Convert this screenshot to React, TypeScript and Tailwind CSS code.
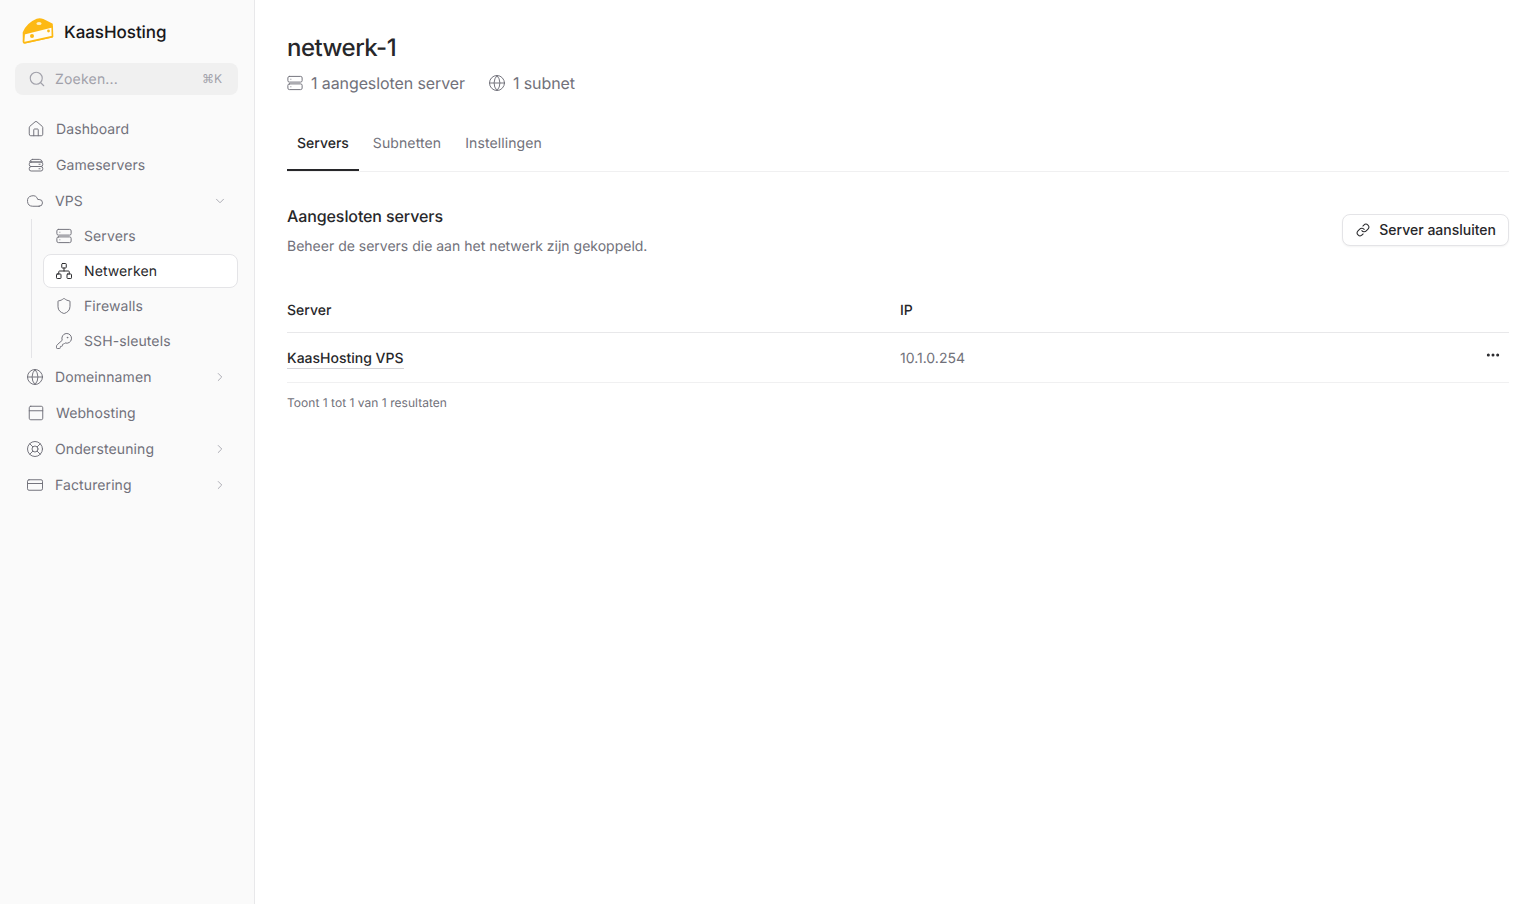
import React from 'react';
import {
  ChevronDown,
  ChevronRight,
  Cloud,
  CreditCard,
  Ellipsis,
  Globe,
  House,
  KeyRound,
  LifeBuoy,
  Link,
  Network,
  PanelTop,
  Search,
  Shield,
} from 'lucide-react';

type IconType = React.ComponentType<{ className?: string; strokeWidth?: number }>;

// Stacked drives icon for the game servers entry.
const GameServerIcon: IconType = ({ className, strokeWidth = 1.5 }) => (
  <svg viewBox="0 0 24 24" fill="none" stroke="currentColor" strokeWidth={strokeWidth} strokeLinecap="round" strokeLinejoin="round" className={className}>
    <path d="M7.5 4.5h9a4.5 4.5 0 0 1 4 3.5H3.5a4.5 4.5 0 0 1 4-3.5Z" />
    <rect x="3" y="8" width="18" height="6" rx="2.5" />
    <rect x="3" y="14" width="18" height="6" rx="2.5" />
    <path d="M16 11h1.5M16 17h1.5" />
  </svg>
);

// Two closely stacked server racks, dots on the left.
const ServerIcon: IconType = ({ className, strokeWidth = 1.5 }) => (
  <svg viewBox="0 0 24 24" fill="none" stroke="currentColor" strokeWidth={strokeWidth} strokeLinecap="round" strokeLinejoin="round" className={className}>
    <rect x="2.5" y="3.2" width="19" height="7.6" rx="2" />
    <rect x="2.5" y="13.2" width="19" height="7.6" rx="2" />
    <path d="M6.5 7h.01M6.5 17h.01" />
  </svg>
);

// KaasHosting cheese logo.
const CheeseLogo = () => (
  <svg viewBox="0 0 32 26" className="-mt-[2px] h-[26px] w-[32px]">
    <path d="M1.5 14.5 C4 9 9 4 15 1.6 C17 .8 19 1 21 1.8 L30 6.2 L30.4 18.6 L3 24.6 C2 24.8 1.6 24.2 1.6 23.4 Z" fill="#fff" stroke="#fdb913" strokeWidth="1.6" strokeLinejoin="round" />
    <path d="M2 14.5 C4 9 9 4 15 1.6 C17 .8 19 1 21 1.8 L30 6.2 L30.2 9 L2.6 15.6 Z" fill="#fdb913" />
    <path d="M2.2 15.6 L30.2 8.8 L30.4 18.6 L3 24.6 C2 24.8 1.6 24.2 1.6 23.4 Z" fill="#fffdf6" stroke="#fdb913" strokeWidth="1.6" strokeLinejoin="round" />
    <ellipse cx="17" cy="5.6" rx="2.6" ry="1.5" fill="#fff1c4" />
    <circle cx="10" cy="18" r="2" fill="#fdb913" />
    <circle cx="26.5" cy="13" r="1.4" fill="#fdb913" />
  </svg>
);

const NavItem: React.FC<{ icon: IconType; label: string; chevron?: 'down' | 'right' }> = ({ icon: Icon, label, chevron }) => (
  <div className={`flex h-9 items-center pr-[11px] text-[14px] text-[#71717a] ${chevron ? 'pl-[11px]' : 'pl-[12px]'}`}>
    <Icon className="size-[18px] shrink-0 text-[#71717a]" strokeWidth={1.3} />
    <span className="ml-[11px] flex-1 tracking-[0.1px]">{label}</span>
    {chevron === 'down' && <ChevronDown className="size-3.5 text-[#a1a1aa]" strokeWidth={1.5} />}
    {chevron === 'right' && <ChevronRight className="size-3.5 text-[#a1a1aa]" strokeWidth={1.5} />}
  </div>
);

const SubItem: React.FC<{ icon: IconType; label: string; active?: boolean }> = ({ icon: Icon, label, active }) => (
  <div
    className={
      active
        ? 'flex h-[34px] items-center rounded-lg border border-[#e4e4e7] bg-white pl-[11px] text-[14px] text-[#27272a]'
        : 'flex h-[34px] items-center border border-transparent pl-[11px] text-[14px] text-[#71717a]'
    }
  >
    <Icon className="size-[18px] shrink-0" strokeWidth={1.3} />
    <span className="ml-[11px] tracking-[0.1px]">{label}</span>
  </div>
);

const App: React.FC = () => {
  return (
    <div className="flex min-h-screen bg-white font-['Inter',sans-serif] antialiased [text-rendering:geometricPrecision]">
      {/* Sidebar */}
      <aside className="flex w-[255px] shrink-0 flex-col border-r border-[#e8e8ea] bg-[#fafafa] pr-4 pl-[15px]">
        <div className="flex h-[63px] items-center pl-[7px]">
          <CheeseLogo />
          <span className="ml-[10px] mt-[4px] text-[17px] font-medium tracking-[-0.05px] text-[#18181b]">KaasHosting</span>
        </div>
        <div className="flex h-8 items-center rounded-lg bg-[#f0f0f0] pl-[13px] pr-4 text-[14px] text-[#a1a1aa]">
          <Search className="size-[18px]" strokeWidth={1.5} />
          <span className="ml-[9px] flex-1 tracking-[0.2px]">Zoeken...</span>
          <span className="text-[12px]">⌘K</span>
        </div>
        <nav className="mt-4 flex flex-col">
          <NavItem icon={House} label="Dashboard" />
          <NavItem icon={GameServerIcon} label="Gameservers" />
          <NavItem icon={Cloud} label="VPS" chevron="down" />
          <div className="mb-[1px] ml-4 flex flex-col gap-[1px] border-l border-[#e4e4e7] pl-[11px]">
            <SubItem icon={ServerIcon} label="Servers" />
            <SubItem icon={Network} label="Netwerken" active />
            <SubItem icon={Shield} label="Firewalls" />
            <SubItem icon={KeyRound} label="SSH-sleutels" />
          </div>
          <NavItem icon={Globe} label="Domeinnamen" chevron="right" />
          <NavItem icon={PanelTop} label="Webhosting" />
          <NavItem icon={LifeBuoy} label="Ondersteuning" chevron="right" />
          <NavItem icon={CreditCard} label="Facturering" chevron="right" />
        </nav>
      </aside>

      {/* Main content */}
      <main className="flex-1 pl-8 pr-[30px] pt-[32px]">
        <h1 className="text-[24px] leading-8 font-medium tracking-[-0.5px] text-[#27272a]">netwerk-1</h1>
        <div className="mt-[7px] flex items-center gap-[23px] text-[16px] leading-6 tracking-[-0.1px] text-[#71717a]">
          <div className="flex items-center gap-[7px]">
            <ServerIcon className="-ml-[1px] size-[18px]" strokeWidth={1.3} />
            <span>1 aangesloten server</span>
          </div>
          <div className="flex items-center gap-[7px]">
            <Globe className="size-[18px]" strokeWidth={1.3} />
            <span>1 subnet</span>
          </div>
        </div>

        <div className="mt-[20px] flex h-[57px] border-b border-[#f0f0f1] text-[14px]">
          <div className="flex items-center border-b-2 border-[#27272a] px-[10px] pt-[2px] font-medium text-[#27272a]">Servers</div>
          <div className="flex items-center px-[14px] pt-[1px] tracking-[0.1px] text-[#71717a]">Subnetten</div>
          <div className="flex items-center px-[10px] pt-[1px] tracking-[0.1px] text-[#71717a]">Instellingen</div>
        </div>

        <div className="mt-[32px] flex items-center justify-between">
          <div>
            <h2 className="text-[16px] leading-6 font-medium tracking-[-0.1px] text-[#27272a]">Aangesloten servers</h2>
            <p className="mt-[7px] text-[14px] leading-6 text-[#71717a]">Beheer de servers die aan het netwerk zijn gekoppeld.</p>
          </div>
          <button className="mb-[4px] flex h-8 items-center rounded-lg border border-[#e4e4e7] bg-white pl-3 pr-3 text-[14px] font-medium text-[#27272a] shadow-xs">
            <Link className="ml-[1px] size-[14px]" strokeWidth={1.75} />
            <span className="ml-[9px]">Server aansluiten</span>
          </button>
        </div>

        <table className="mt-[30px] w-full border-collapse text-[14px]">
          <thead>
            <tr className="h-[43px] border-b border-[#e8e8ea] text-left">
              <th className="w-[613px] pt-[1px] font-medium text-[#27272a]">Server</th>
              <th className="pt-[1px] font-medium text-[#27272a]">IP</th>
              <th />
            </tr>
          </thead>
          <tbody>
            <tr className="h-[50px] border-b border-[#f0f0f1]">
              <td className="pt-[2px] font-medium text-[#27272a]">
                <span className="border-b border-[#d4d4d8] pb-[1px]">KaasHosting VPS</span>
              </td>
              <td className="pt-[2px] text-[#71717a]">10.1.0.254</td>
              <td className="pt-[2px] text-right">
                <Ellipsis className="ml-auto mr-2 mb-[6px] size-4 text-[#27272a]" strokeWidth={2.5} />
              </td>
            </tr>
          </tbody>
        </table>
        <p className="mt-[12px] text-[12px] leading-4 tracking-[0.03px] text-[#71717a]">Toont 1 tot 1 van 1 resultaten</p>
      </main>
    </div>
  );
};

export default App;
